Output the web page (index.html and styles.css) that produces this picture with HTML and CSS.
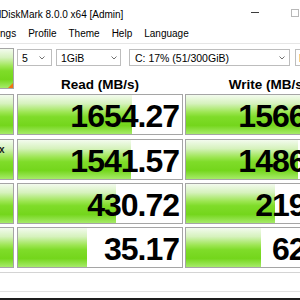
FILE: index.html
```html
<!DOCTYPE html>
<html>
<head>
<meta charset="utf-8">
<title>CrystalDiskMark</title>
<link rel="stylesheet" href="styles.css">
</head>
<body>
<div class="window">
  <div class="titlebar">
    <span class="title">CrystalDiskMark 8.0.0 x64 [Admin]</span>
    <span class="win-min"></span>
    <span class="win-max"></span>
  </div>
  <div class="menubar">
    <span class="menu-item first">Settings</span>
    <span class="menu-item">Profile</span>
    <span class="menu-item">Theme</span>
    <span class="menu-item">Help</span>
    <span class="menu-item">Language</span>
  </div>
  <div class="top">
    <div class="all-btn"></div>
    <div class="top-right">
      <div class="toolbar">
        <div class="dd dd-count"><span>5</span><svg class="chev" width="6" height="4" viewBox="0 0 6 4"><polyline points="0.5,0.5 3,3 5.5,0.5" /></svg></div>
        <div class="dd dd-size"><span>1GiB</span><svg class="chev" width="6" height="4" viewBox="0 0 6 4"><polyline points="0.5,0.5 3,3 5.5,0.5" /></svg></div>
        <div class="dd dd-drive"><span>C: 17% (51/300GiB)</span><svg class="chev" width="6" height="4" viewBox="0 0 6 4"><polyline points="0.5,0.5 3,3 5.5,0.5" /></svg></div>
        <div class="dd dd-unit"><span>MB/s</span></div>
      </div>
      <div class="headers">
        <div class="hdr hdr-read">Read (MB/s)</div>
        <div class="hdr hdr-write">Write (MB/s)</div>
      </div>
    </div>
  </div>
  <div class="rows">
    <div class="row">
      <div class="label"></div>
      <div class="meter read" style="--w:114px"><span class="val">1654.27</span></div>
      <div class="meter write" style="--w:116px"><span class="val">1566.93</span></div>
    </div>
    <div class="row">
      <div class="label"><span class="lbl">x</span></div>
      <div class="meter read" style="--w:113px"><span class="val">1541.57</span></div>
      <div class="meter write" style="--w:112px"><span class="val">1486.42</span></div>
    </div>
    <div class="row">
      <div class="label"></div>
      <div class="meter read" style="--w:98px"><span class="val">430.72</span></div>
      <div class="meter write" style="--w:89px"><span class="val">219.87</span></div>
    </div>
    <div class="row">
      <div class="label"></div>
      <div class="meter read" style="--w:69px"><span class="val">35.17</span></div>
      <div class="meter write" style="--w:75px"><span class="val">62.31</span></div>
    </div>
  </div>
  <div class="comment"></div>
  <div class="edge"></div>
</div>
</body>
</html>
```

FILE: styles.css
```css
html, body {
  margin: 0;
  padding: 0;
  width: 300px;
  height: 300px;
  overflow: hidden;
  background: #ffffff;
}

.window {
  width: 360px;
  font-family: "Liberation Sans", Arial, sans-serif;
  color: #000;
  background: #fff;
}

.titlebar {
  display: flex;
  align-items: center;
  height: 25px;
  width: 300px;
  font-size: 10px;
}

.title {
  margin-left: -30px;
  white-space: nowrap;
  padding-top: 3px;
}

.win-min {
  margin-left: auto;
  width: 8px;
  height: 1px;
  background: #3c3c3c;
}

.win-max {
  margin-left: 32px;
  margin-right: 1px;
  box-sizing: border-box;
  width: 8px;
  height: 8px;
  border: 1px solid #b8b8b8;
}

.menubar {
  display: flex;
  gap: 12px;
  height: 18px;
  line-height: 18px;
  font-size: 10px;
  border-bottom: 1px solid #e6e6e6;
  white-space: nowrap;
}

.menu-item.first {
  margin-left: -20px;
}

.top {
  display: flex;
  height: 45px;
  margin-top: 4px;
  margin-bottom: 1px;
}

.all-btn {
  position: relative;
  box-sizing: border-box;
  width: 14px;
  height: 41px;
  flex-shrink: 0;
  border: 1px solid #a5a5a5;
  border-left: none;
  background: linear-gradient(to bottom, #f3fbee 0%, #d6f2bd 22%, #9de653 44%, #7fdc29 56%, #74d61c 78%, #a6eb69 100%);
}

.all-btn::after {
  content: "";
  position: absolute;
  right: 0;
  bottom: 0;
  width: 0;
  height: 0;
  border-left: 5px solid transparent;
  border-bottom: 5px solid #f07512;
}

.top-right {
  display: flex;
  flex-direction: column;
  margin-left: 3px;
}

.toolbar {
  display: flex;
  margin-top: 1px;
  height: 17px;
  font-size: 10.5px;
}

.dd {
  box-sizing: border-box;
  display: flex;
  align-items: center;
  justify-content: space-between;
  height: 17px;
  flex-shrink: 0;
  border: 1px solid #bdbdbd;
  background: #fff;
  padding-left: 4px;
  white-space: nowrap;
}

.chev polyline {
  fill: none;
  stroke: #707070;
  stroke-width: 1;
}

.dd-count {
  width: 35px;
  padding-right: 6px;
}

.dd-size {
  width: 65px;
  margin-left: 4px;
  padding-right: 3px;
}

.dd-drive {
  width: 161px;
  margin-left: 8px;
  padding-left: 5px;
  padding-right: 4px;
}

.dd-unit {
  width: 50px;
  margin-left: 5px;
  padding-left: 3px;
}

.headers {
  display: flex;
  margin-top: auto;
  line-height: 16px;
  font-size: 13.5px;
  font-weight: bold;
}

.hdr {
  width: 166px;
  flex-shrink: 0;
  text-align: center;
  white-space: nowrap;
}

.hdr-write {
  margin-left: 2px;
}

.rows {
  display: flex;
  flex-direction: column;
  gap: 3px;
}

.rows .row:first-child {
  margin-bottom: 1px;
}

.row {
  display: flex;
  height: 41px;
}

.label {
  box-sizing: border-box;
  width: 14px;
  height: 41px;
  flex-shrink: 0;
  border: 1px solid #a5a5a5;
  border-left: none;
  padding-top: 4px;
  overflow: hidden;
  background: linear-gradient(to bottom, #f3fbee 0%, #d6f2bd 22%, #9de653 44%, #7fdc29 56%, #74d61c 78%, #a6eb69 100%);
}

.lbl {
  display: block;
  margin-left: -1px;
  font-size: 10px;
  font-weight: bold;
  line-height: 12px;
  color: #1a1a1a;
}

.meter {
  box-sizing: border-box;
  display: flex;
  align-items: center;
  justify-content: flex-end;
  width: 166px;
  height: 41px;
  flex-shrink: 0;
  border: 1px solid #a5a5a5;
  padding-top: 2px;
  padding-right: 3px;
  background:
    linear-gradient(to bottom, #f3fbee 0%, #d6f2bd 22%, #9de653 44%, #7fdc29 56%, #74d61c 78%, #a6eb69 100%) 0 0 / var(--w) 100% no-repeat,
    #ffffff;
}

.meter.read {
  margin-left: 3px;
}

.meter.write {
  margin-left: 2px;
}

.val {
  font-size: 32px;
  line-height: 30px;
  letter-spacing: -1px;
  font-weight: bold;
  color: #000;
  white-space: nowrap;
}

.comment {
  box-sizing: border-box;
  margin-top: 4px;
  height: 20px;
  width: 300px;
  border-top: 1px solid #d4d4d4;
  border-bottom: 1px solid #e2e2e2;
}

.edge {
  margin-top: 6px;
  height: 2px;
  width: 300px;
  background: #1e1e1e;
}
```
